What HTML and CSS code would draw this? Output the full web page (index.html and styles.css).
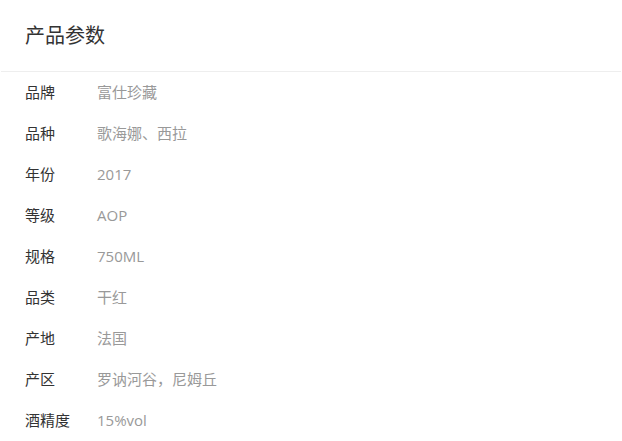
FILE: index.html
```html
<!DOCTYPE html>
<html lang="zh-CN">
<head>
    <meta charset="UTF-8">
    <meta name="viewport" content="width=device-width, initial-scale=1.0">
    <title>产品参数</title>
    <link rel="stylesheet" href="styles.css">
</head>
<body>
    <div class="panel">
        <div class="panel-head">产品参数</div>
        <ul class="params">
            <li><span class="label">品牌</span><span class="value">富仕珍藏</span></li>
            <li><span class="label">品种</span><span class="value">歌海娜、西拉</span></li>
            <li><span class="label">年份</span><span class="value">2017</span></li>
            <li><span class="label">等级</span><span class="value">AOP</span></li>
            <li><span class="label">规格</span><span class="value">750ML</span></li>
            <li><span class="label">品类</span><span class="value">干红</span></li>
            <li><span class="label">产地</span><span class="value">法国</span></li>
            <li><span class="label">产区</span><span class="value">罗讷河谷，尼姆丘</span></li>
            <li><span class="label">酒精度</span><span class="value">15%vol</span></li>
        </ul>
    </div>
</body>
</html>
```

FILE: styles.css
```css
body {
    margin: 0;
    padding: 0;
    background: #fff;
    font-family: "Open Sans", "Noto Sans CJK SC", sans-serif;
}
.panel {
    padding: 0 1px;
}
.panel-head {
    height: 71px;
    line-height: 71px;
    padding: 0 24px;
    font-size: 20px;
    color: #333;
    border-bottom: 1px solid #eee;
}
.params {
    list-style: none;
    margin: 0;
    padding: 0 24px;
}
.params li {
    display: flex;
    height: 41px;
    line-height: 41px;
    font-size: 15px;
}
.label {
    width: 72px;
    color: #333;
}
.value {
    color: #999;
}
```
